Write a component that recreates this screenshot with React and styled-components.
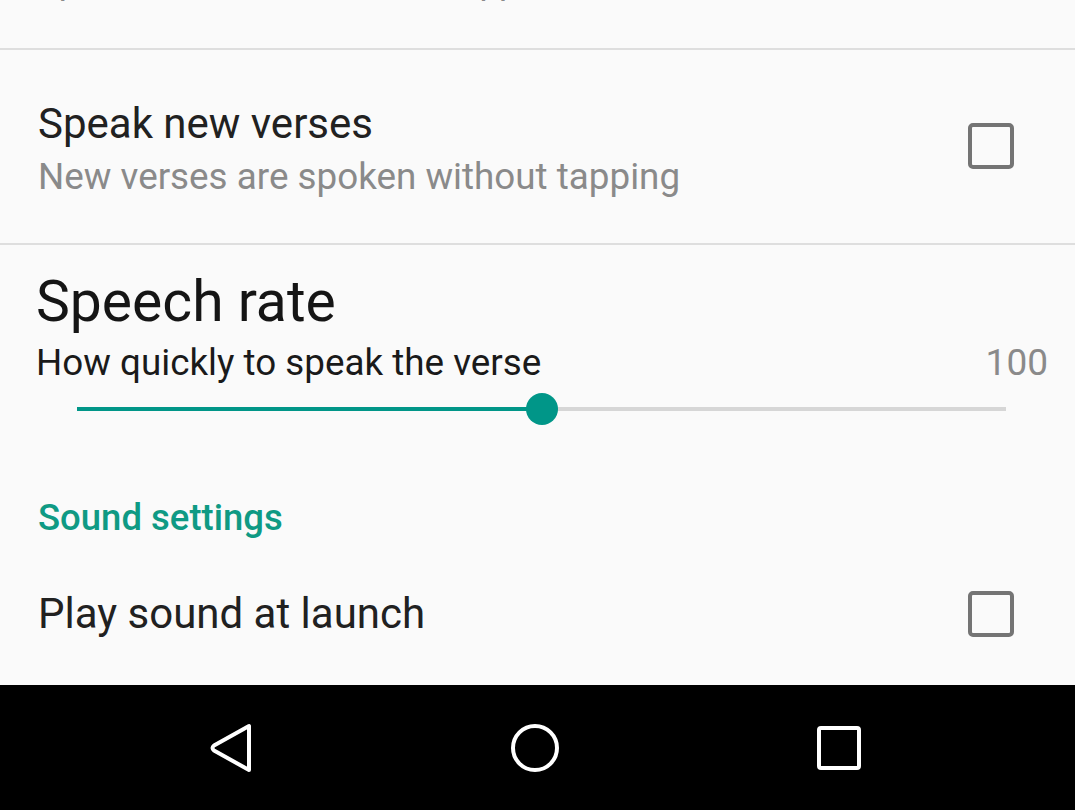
import React from "react";
import styled, { createGlobalStyle } from "styled-components";

const GlobalStyle = createGlobalStyle`
  html, body {
    margin: 0;
    padding: 0;
    background: #fafafa;
  }
  body {
    font-family: Roboto, "Noto Sans", "Liberation Sans", sans-serif;
    -webkit-font-smoothing: antialiased;
  }
`;

const Screen = styled.div`
  width: 1075px;
  height: 810px;
  background: #fafafa;
  display: flex;
  flex-direction: column;
  overflow: hidden;
`;

const Content = styled.div`
  flex: 1;
  display: flex;
  flex-direction: column;
`;

const ClippedRow = styled.div`
  height: 48px;
  overflow: hidden;
  padding-left: 38px;
`;

const ClippedText = styled.div`
  margin-top: -37px;
  line-height: 40px;
  font-size: 35px;
  color: #8a8a8a;
`;

const Divider = styled.div`
  height: 2px;
  background: #dedede;
`;

const PrefRow = styled.div`
  display: flex;
  align-items: ${(p) => (p.$center ? "center" : "flex-start")};
  height: ${(p) => p.$height}px;
  padding: ${(p) => p.$padTop || 0}px 61px 0 38px;
  box-sizing: border-box;
`;

const PrefText = styled.div`
  flex: 1;
  display: flex;
  flex-direction: column;
`;

const Title = styled.div`
  font-size: 42px;
  line-height: 54px;
  color: #212121;
`;

const Summary = styled.div`
  font-size: 36.8px;
  line-height: 52px;
  color: #8a8a8a;
`;

const Checkbox = styled.div`
  width: 46px;
  height: 46px;
  box-sizing: border-box;
  border: 4px solid #747474;
  border-radius: 5px;
  margin-top: ${(p) => p.$offset || 0}px;
`;

const SliderPref = styled.div`
  display: flex;
  flex-direction: column;
  padding: 26px 27px 0 36px;
`;

const BigTitle = styled.div`
  font-size: 57px;
  line-height: 62px;
  color: #151515;
`;

const SubRow = styled.div`
  display: flex;
  justify-content: space-between;
  align-items: center;
  height: 58px;
`;

const SubText = styled.div`
  font-size: 36.8px;
  color: #1a1a1a;
`;

const Value = styled.div`
  font-size: 37px;
  color: #8a8a8a;
`;

const SliderWrap = styled.div`
  height: 36px;
  display: flex;
  align-items: center;
  padding: 0 42px 0 41px;
`;

const Track = styled.div`
  position: relative;
  flex: 1;
  height: 4px;
  background: #d6d6d6;
`;

const Fill = styled.div`
  height: 100%;
  background: #009688;
`;

const Thumb = styled.div`
  position: absolute;
  top: 50%;
  width: 32px;
  height: 32px;
  border-radius: 50%;
  background: #009688;
  transform: translate(-50%, -50%);
`;

const Category = styled.div`
  margin-top: 66px;
  padding-left: 38px;
  font-size: 36.5px;
  line-height: 50px;
  font-weight: 500;
  color: #0f9a84;
`;

const NavBar = styled.div`
  height: 126px;
  background: #000;
  display: flex;
  justify-content: center;
  align-items: center;
  gap: 256px;
  padding-right: 5px;
`;

const NavIcon = styled.svg`
  width: 48px;
  height: 50px;
  display: block;
`;

function Slider({ value }) {
  return (
    <SliderWrap>
      <Track>
        <Fill style={{ width: `${value}%` }} />
        <Thumb style={{ left: `${value}%` }} />
      </Track>
    </SliderWrap>
  );
}

export default function App() {
  return (
    <>
      <GlobalStyle />
      <Screen>
        <Content>
          <ClippedRow>
            <ClippedText>Speak the verse when it is tapped</ClippedText>
          </ClippedRow>
          <Divider />
          <PrefRow $height={193} $padTop={47}>
            <PrefText>
              <Title>Speak new verses</Title>
              <Summary>New verses are spoken without tapping</Summary>
            </PrefText>
            <Checkbox $offset={26} />
          </PrefRow>
          <Divider />
          <SliderPref>
            <BigTitle>Speech rate</BigTitle>
            <SubRow>
              <SubText>How quickly to speak the verse</SubText>
              <Value>100</Value>
            </SubRow>
            <Slider value={50} />
          </SliderPref>
          <Category>Sound settings</Category>
          <PrefRow $height={142} $center>
            <PrefText>
              <Title>Play sound at launch</Title>
            </PrefText>
            <Checkbox />
          </PrefRow>
        </Content>
        <NavBar>
          <NavIcon viewBox="0 0 48 50">
            <path
              d="M42 3 L42 47 L7 27.5 Q4 25 7 22.5 Z"
              fill="none"
              stroke="#fff"
              strokeWidth="4"
              strokeLinejoin="round"
            />
          </NavIcon>
          <NavIcon viewBox="0 0 48 50">
            <circle cx="24" cy="25" r="22" fill="none" stroke="#fff" strokeWidth="4" />
          </NavIcon>
          <NavIcon viewBox="0 0 48 50">
            <rect x="4" y="5" width="40" height="40" rx="2" fill="none" stroke="#fff" strokeWidth="4" />
          </NavIcon>
        </NavBar>
      </Screen>
    </>
  );
}
